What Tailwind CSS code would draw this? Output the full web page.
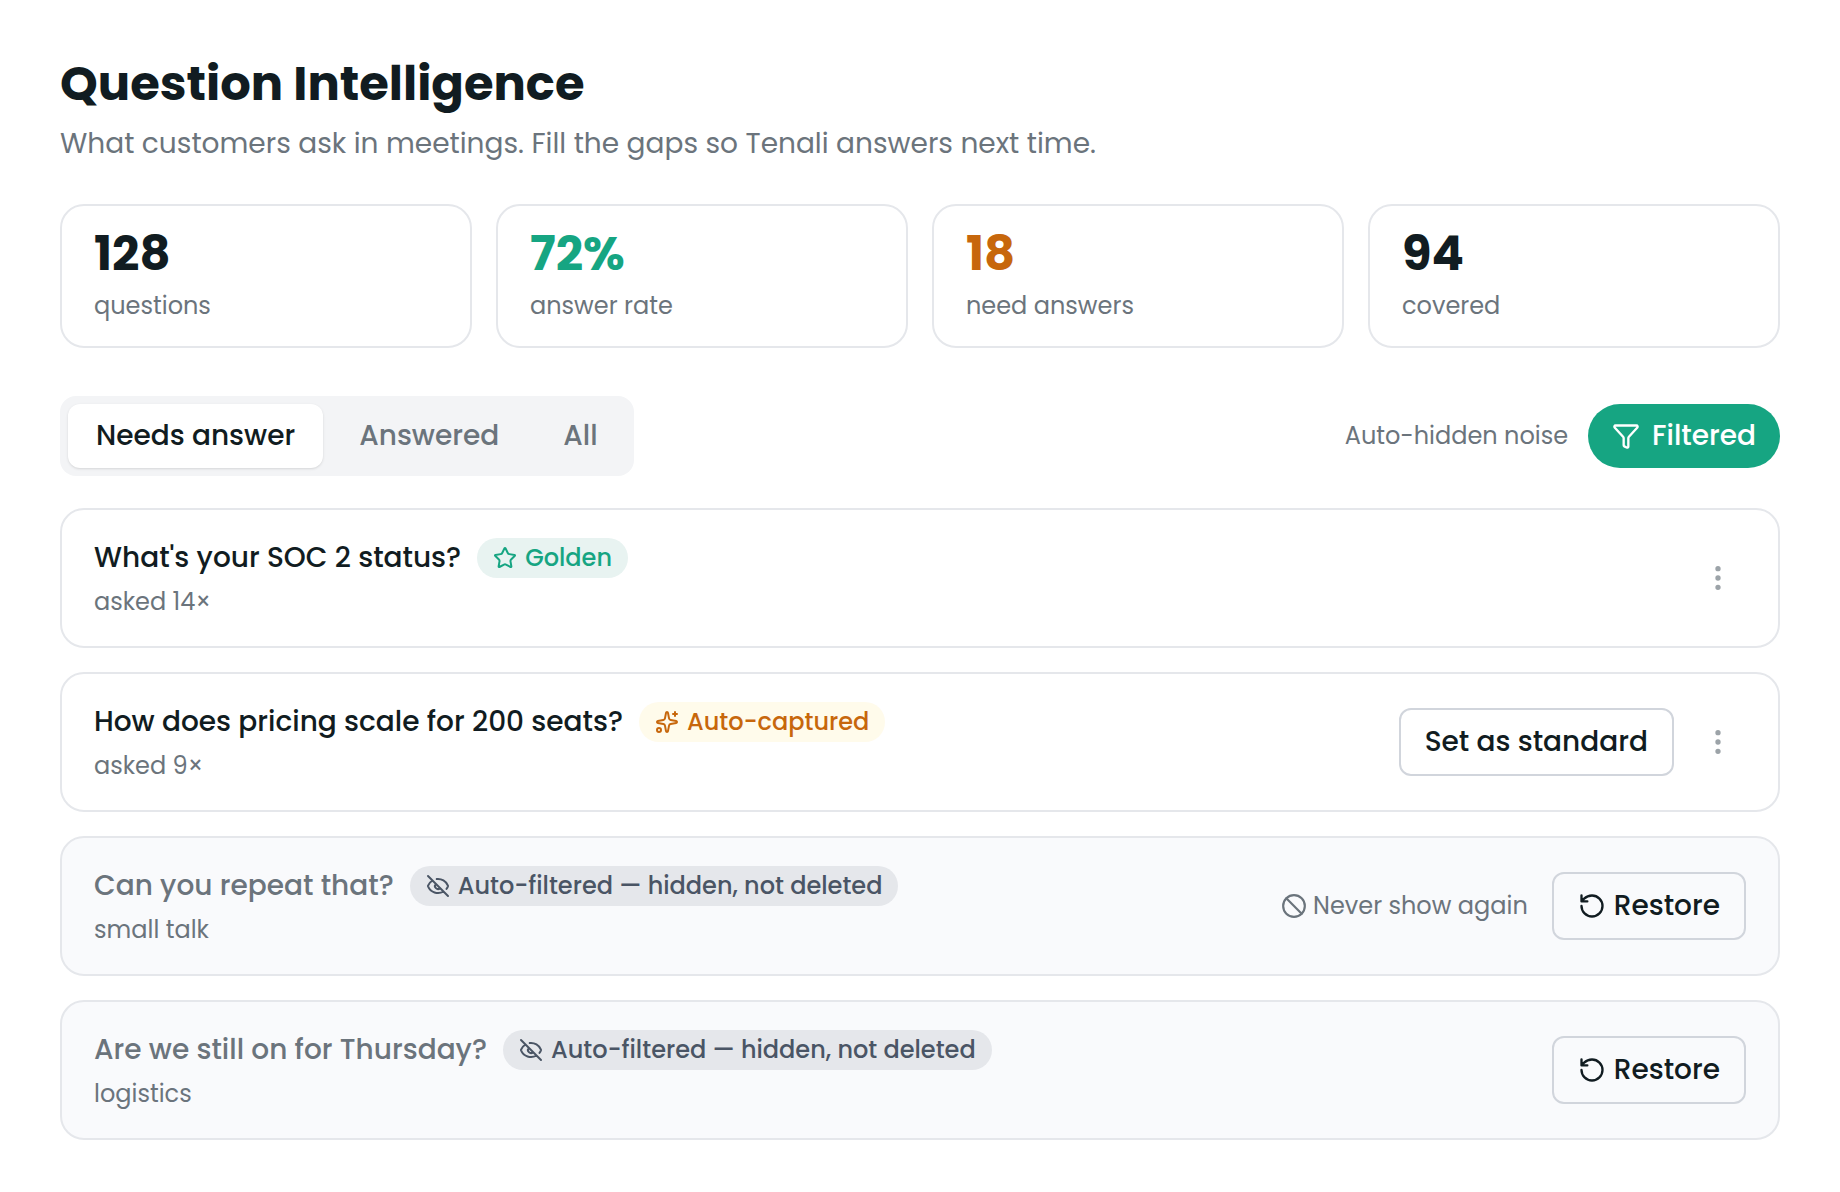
<!DOCTYPE html>
<html lang="en">
<head>
<meta charset="utf-8">
<meta name="viewport" content="width=device-width, initial-scale=1">
<title>Question Intelligence</title>
<script src="https://cdn.jsdelivr.net/npm/@tailwindcss/browser@4"></script>
</head>
<body class="min-h-screen bg-white font-[Poppins,Inter,sans-serif] text-[#111c21]">
<svg class="hidden" aria-hidden="true">
  <symbol id="funnel" viewBox="0 0 24 24"><path d="M10 20a1 1 0 0 0 .553.895l2 1A1 1 0 0 0 14 21v-7a2 2 0 0 1 .517-1.341L21.74 4.67A1 1 0 0 0 21 3H3a1 1 0 0 0-.742 1.67l7.225 7.989A2 2 0 0 1 10 14z"/></symbol>
  <symbol id="star" viewBox="0 0 24 24"><path d="M11.525 2.295a.53.53 0 0 1 .95 0l2.31 4.679a2.123 2.123 0 0 0 1.595 1.16l5.166.756a.53.53 0 0 1 .294.904l-3.736 3.638a2.123 2.123 0 0 0-.611 1.878l.882 5.14a.53.53 0 0 1-.771.56l-4.618-2.428a2.122 2.122 0 0 0-1.973 0L6.396 21.01a.53.53 0 0 1-.77-.56l.881-5.139a2.122 2.122 0 0 0-.611-1.879L2.16 9.795a.53.53 0 0 1 .294-.906l5.165-.755a2.122 2.122 0 0 0 1.597-1.16z"/></symbol>
  <symbol id="sparkles" viewBox="0 0 24 24"><path d="M11.017 2.814a1 1 0 0 1 1.966 0l1.051 5.558a2 2 0 0 0 1.594 1.594l5.558 1.051a1 1 0 0 1 0 1.966l-5.558 1.051a2 2 0 0 0-1.594 1.594l-1.051 5.558a1 1 0 0 1-1.966 0l-1.051-5.558a2 2 0 0 0-1.594-1.594l-5.558-1.051a1 1 0 0 1 0-1.966l5.558-1.051a2 2 0 0 0 1.594-1.594zM20 2v4M22 4h-4"/><circle cx="4" cy="20" r="2"/></symbol>
  <symbol id="eye-off" viewBox="0 0 24 24"><path d="M10.733 5.076a10.744 10.744 0 0 1 11.205 6.575 1 1 0 0 1 0 .696 10.747 10.747 0 0 1-1.444 2.49M14.084 14.158a3 3 0 0 1-4.242-4.242M17.479 17.499a10.75 10.75 0 0 1-15.417-5.151 1 1 0 0 1 0-.696 10.75 10.75 0 0 1 4.446-5.143M2 2l20 20"/></symbol>
  <symbol id="ban" viewBox="0 0 24 24"><circle cx="12" cy="12" r="10"/><path d="m4.9 4.9 14.2 14.2"/></symbol>
  <symbol id="restore" viewBox="0 0 24 24"><path d="M3 12a9 9 0 1 0 9-9 9.75 9.75 0 0 0-6.74 2.74L3 8M3 3v5h5"/></symbol>
  <symbol id="more" viewBox="0 0 24 24"><circle cx="12" cy="12" r="1"/><circle cx="12" cy="5" r="1"/><circle cx="12" cy="19" r="1"/></symbol>
</svg>
<main class="px-[60px] py-[60px]">
  <h1 class="text-5xl leading-12 font-bold">Question Intelligence</h1>
  <p class="mt-4 text-[28px] leading-10 text-[#6b747c]">What customers ask in meetings. Fill the gaps so Tenali answers next time.</p>

  <dl class="mt-10 grid grid-cols-4 gap-6">
    <div class="flex flex-col-reverse gap-3 rounded-3xl border-2 border-gray-200 px-8 py-6">
      <dt class="text-2xl leading-8 text-[#6b747c]">questions</dt>
      <dd class="text-5xl leading-12 font-bold">128</dd>
    </div>
    <div class="flex flex-col-reverse gap-3 rounded-3xl border-2 border-gray-200 px-8 py-6">
      <dt class="text-2xl leading-8 text-[#6b747c]">answer rate</dt>
      <dd class="text-5xl leading-12 font-bold text-[#16a582]">72%</dd>
    </div>
    <div class="flex flex-col-reverse gap-3 rounded-3xl border-2 border-gray-200 px-8 py-6">
      <dt class="text-2xl leading-8 text-[#6b747c]">need answers</dt>
      <dd class="text-5xl leading-12 font-bold text-[#c7670c]">18</dd>
    </div>
    <div class="flex flex-col-reverse gap-3 rounded-3xl border-2 border-gray-200 px-8 py-6">
      <dt class="text-2xl leading-8 text-[#6b747c]">covered</dt>
      <dd class="text-5xl leading-12 font-bold">94</dd>
    </div>
  </dl>

  <div class="mt-12 flex items-center justify-between">
    <div role="tablist" class="flex gap-2 rounded-2xl bg-gray-100 p-2 text-[28px] leading-10 font-medium text-[#6b747c]">
      <button role="tab" aria-selected="true" class="rounded-xl bg-white px-7 py-3 text-[#111c21] shadow-sm">Needs answer</button>
      <button role="tab" aria-selected="false" class="rounded-xl px-7 py-3">Answered</button>
      <button role="tab" aria-selected="false" class="rounded-xl px-7 py-3">All</button>
    </div>
    <div class="flex items-center gap-5">
      <span id="noise-label" class="text-2xl leading-8 text-[#6b747c]">Auto-hidden noise</span>
      <button aria-describedby="noise-label" class="flex items-center gap-3 rounded-full bg-[#16a582] px-6 py-3 text-[28px] leading-10 font-medium text-white">
        <svg class="size-7 fill-none stroke-current stroke-2 [stroke-linecap:round] [stroke-linejoin:round]"><use href="#funnel"/></svg>Filtered</button>
    </div>
  </div>

  <ul class="mt-8 flex flex-col gap-6">
    <li class="flex items-center justify-between rounded-3xl border-2 border-gray-200 px-8 py-7">
      <div>
        <div class="flex items-center gap-4">
          <h2 class="text-[28px] leading-10 font-medium">What's your SOC 2 status?</h2>
          <span class="flex items-center gap-2 rounded-full bg-[#e8f3f1] px-4 text-2xl leading-10 font-medium text-[#16a582]">
            <svg class="size-6 fill-none stroke-current stroke-2 [stroke-linecap:round] [stroke-linejoin:round]"><use href="#star"/></svg>Golden</span>
        </div>
        <p class="mt-2 text-2xl leading-8 text-[#6b747c]">asked 14×</p>
      </div>
      <button aria-label="More options" class="p-3 text-[#9ca3a8]">
        <svg class="size-8 fill-none stroke-current stroke-2 [stroke-linecap:round]"><use href="#more"/></svg></button>
    </li>
    <li class="flex items-center justify-between rounded-3xl border-2 border-gray-200 px-8 py-7">
      <div>
        <div class="flex items-center gap-4">
          <h2 class="text-[28px] leading-10 font-medium">How does pricing scale for 200 seats?</h2>
          <span class="flex items-center gap-2 rounded-full bg-amber-50 px-4 text-2xl leading-10 font-medium text-[#c7670c]">
            <svg class="size-6 fill-none stroke-current stroke-2 [stroke-linecap:round] [stroke-linejoin:round]"><use href="#sparkles"/></svg>Auto-captured</span>
        </div>
        <p class="mt-2 text-2xl leading-8 text-[#6b747c]">asked 9×</p>
      </div>
      <div class="flex items-center gap-4">
        <button class="rounded-xl border-2 border-gray-300 px-6 py-3 text-[28px] leading-10 font-medium">Set as standard</button>
        <button aria-label="More options" class="p-3 text-[#9ca3a8]">
          <svg class="size-8 fill-none stroke-current stroke-2 [stroke-linecap:round]"><use href="#more"/></svg></button>
      </div>
    </li>
    <li class="flex items-center justify-between rounded-3xl border-2 border-gray-200 bg-[#f9fafc] px-8 py-7">
      <div>
        <div class="flex items-center gap-4">
          <h2 class="text-[28px] leading-10 font-medium text-[#6b747c]">Can you repeat that?</h2>
          <span class="flex items-center gap-2 rounded-full bg-gray-200 px-4 text-2xl leading-10 font-medium text-gray-600">
            <svg class="size-6 fill-none stroke-current stroke-2 [stroke-linecap:round] [stroke-linejoin:round]"><use href="#eye-off"/></svg>Auto-filtered — hidden, not deleted</span>
        </div>
        <p class="mt-2 text-2xl leading-8 text-[#6b747c]">small talk</p>
      </div>
      <div class="flex items-center gap-6">
        <button class="flex items-center gap-1.5 text-2xl leading-8 text-[#6b747c]">
          <svg class="size-[26px] fill-none stroke-current stroke-2 [stroke-linecap:round] [stroke-linejoin:round]"><use href="#ban"/></svg>Never show again</button>
        <button class="flex items-center gap-2 rounded-xl border-2 border-gray-300 px-6 py-3 text-[28px] leading-10 font-medium">
          <svg class="size-7 fill-none stroke-current stroke-2 [stroke-linecap:round] [stroke-linejoin:round]"><use href="#restore"/></svg>Restore</button>
      </div>
    </li>
    <li class="flex items-center justify-between rounded-3xl border-2 border-gray-200 bg-[#f9fafc] px-8 py-7">
      <div>
        <div class="flex items-center gap-4">
          <h2 class="text-[28px] leading-10 font-medium text-[#6b747c]">Are we still on for Thursday?</h2>
          <span class="flex items-center gap-2 rounded-full bg-gray-200 px-4 text-2xl leading-10 font-medium text-gray-600">
            <svg class="size-6 fill-none stroke-current stroke-2 [stroke-linecap:round] [stroke-linejoin:round]"><use href="#eye-off"/></svg>Auto-filtered — hidden, not deleted</span>
        </div>
        <p class="mt-2 text-2xl leading-8 text-[#6b747c]">logistics</p>
      </div>
      <button class="flex items-center gap-2 rounded-xl border-2 border-gray-300 px-6 py-3 text-[28px] leading-10 font-medium">
        <svg class="size-7 fill-none stroke-current stroke-2 [stroke-linecap:round] [stroke-linejoin:round]"><use href="#restore"/></svg>Restore</button>
    </li>
  </ul>
</main>
</body>
</html>
